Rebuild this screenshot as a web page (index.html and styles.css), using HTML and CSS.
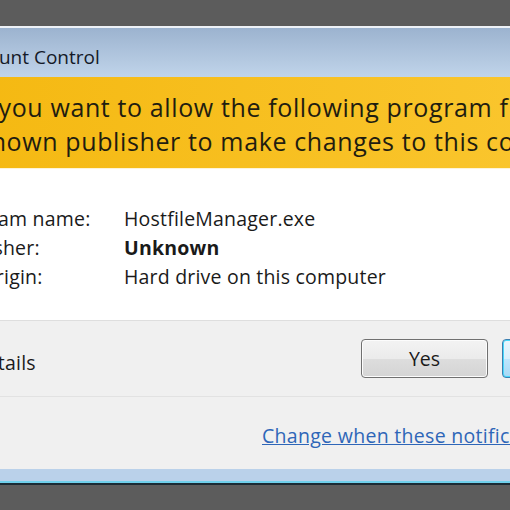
FILE: index.html
```html
<!DOCTYPE html>
<html>
<head>
<meta charset="utf-8">
<title>User Account Control</title>
<link rel="stylesheet" href="styles.css">
</head>
<body>
<div class="dialog">
  <div class="titlebar"><span class="title">User Account Control</span></div>
  <div class="banner">
    <div class="shield">
      <svg width="40" height="48" viewBox="0 0 40 48"><path d="M20 2 L37 8 V24 C37 36 28 43 20 46 C12 43 3 36 3 24 V8 Z" fill="#d7a400" stroke="#8a6a00" stroke-width="2"/></svg>
    </div>
    <p class="question">Do you want to allow the following program from an<br><span class="line2">unknown publisher to make changes to this computer?</span></p>
  </div>
  <div class="info">
    <div class="row"><span class="label">Program name:</span><span class="value">HostfileManager.exe</span></div>
    <div class="row"><span class="label">Publisher:</span><span class="value strong">Unknown</span></div>
    <div class="row"><span class="label">File origin:</span><span class="value">Hard drive on this computer</span></div>
  </div>
  <div class="footer">
    <div class="actions">
      <span class="details">Show details</span>
      <div class="buttons">
        <button class="btn">Yes</button>
        <button class="btn btn-focus">No</button>
      </div>
    </div>
    <div class="linkrow"><a class="link" href="#">Change when these notifications appear</a></div>
  </div>
  <div class="frame-bottom"></div>
</div>
</body>
</html>
```

FILE: styles.css
```css
html, body {
  margin: 0;
  padding: 0;
}
body {
  width: 510px;
  height: 510px;
  overflow: hidden;
  background: #5c5c5c;
  font-family: "Open Sans", "Noto Sans", sans-serif;
}
.dialog {
  margin-top: 26px;
  margin-left: -100px;
  width: 780px;
  border-top: 2px solid #eef2f7;
}
.titlebar {
  height: 49px;
  background: linear-gradient(#9cb3cf, #c0d4ea);
  display: flex;
  align-items: center;
  padding-left: 11px;
}
.title {
  font-size: 19px;
  color: #141a28;
  padding-top: 8px;
}
.banner {
  height: 91px;
  background: linear-gradient(90deg, #f4b70e, #fbc935);
  display: flex;
  align-items: center;
}
.shield {
  width: 57px;
  display: flex;
  justify-content: center;
}
.question {
  margin: 0;
  padding-top: 2px;
  font-size: 25px;
  letter-spacing: 0.62px;
  line-height: 34px;
  color: #1f1d10;
}
.line2 {
  margin-left: -12px;
}
.info {
  background: #fff;
  height: 152px;
  box-sizing: border-box;
  padding: 35px 0 0 47px;
  border-top: 1px solid #fdf4d8;
}
.row {
  display: flex;
  font-size: 19.5px;
  letter-spacing: 0.2px;
  line-height: 29px;
  color: #1a1a1a;
}
.label {
  width: 177px;
}
.strong {
  font-weight: bold;
}
.footer {
  background: #f0f0f0;
  border-top: 1px solid #dedede;
  height: 149px;
  box-sizing: border-box;
}
.actions {
  display: flex;
  align-items: center;
  justify-content: space-between;
  padding: 17px 0 18px 19px;
  border-bottom: 1px solid #e2e2e2;
  height: 76px;
  box-sizing: border-box;
}
.details {
  font-size: 19.5px;
  letter-spacing: 0.2px;
  color: #1a1a1a;
  padding-top: 8px;
}
.buttons {
  display: flex;
  gap: 14px;
  padding-right: 51px;
}
.btn {
  width: 127px;
  height: 39px;
  border: 1px solid #707070;
  border-radius: 4px;
  background: linear-gradient(#f3f3f3 0%, #ebebeb 50%, #dddddd 51%, #d4d4d4 100%);
  box-shadow: inset 0 0 0 1px #fcfcfc;
  font-family: inherit;
  font-size: 19.5px;
  color: #1a1a1a;
  padding: 0;
}
.btn-focus {
  border-color: #3c7fb1;
  background: linear-gradient(#eaf6fd 0%, #d9f0fc 50%, #bee6fd 51%, #a7d9f5 100%);
  box-shadow: inset 0 0 0 1px #48d8fb;
}
.linkrow {
  display: flex;
  padding: 25px 0 0 362px;
}
.link {
  font-size: 19.5px;
  letter-spacing: 0.3px;
  color: #2e66b8;
  text-decoration: underline;
}
.frame-bottom {
  height: 12px;
  background: #bad1ea;
  border-bottom: 2px solid #6fd0ec;
  box-shadow: 0 2px 0 #1b2b35;
}
```
